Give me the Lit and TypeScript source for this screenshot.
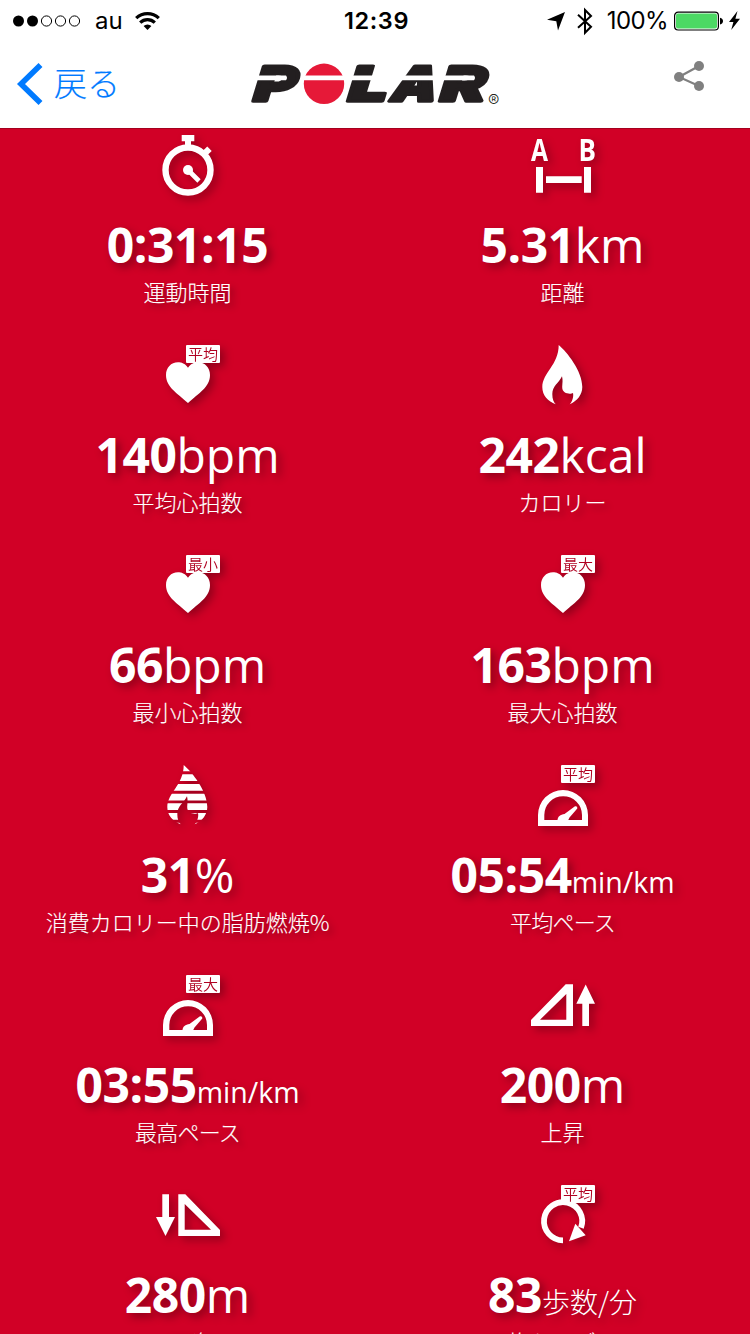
import { LitElement, html, css, svg, nothing } from 'lit';
import { customElement, property } from 'lit/decorators.js';

type IconName = 'stopwatch' | 'distance' | 'heart' | 'flame' | 'fat' | 'gauge' | 'ascent' | 'descent' | 'cadence';

interface Stat {
  icon: IconName;
  badge?: string;
  value: string;
  unit?: string;
  small?: boolean;
  tight?: boolean;
  label: string;
}

const STATS: Stat[] = [
  { icon: 'stopwatch', value: '0:31:15', label: '運動時間' },
  { icon: 'distance', value: '5.31', unit: 'km', label: '距離' },
  { icon: 'heart', badge: '平均', value: '140', unit: 'bpm', label: '平均心拍数' },
  { icon: 'flame', value: '242', unit: 'kcal', label: 'カロリー' },
  { icon: 'heart', badge: '最小', value: '66', unit: 'bpm', label: '最小心拍数' },
  { icon: 'heart', badge: '最大', value: '163', unit: 'bpm', label: '最大心拍数' },
  { icon: 'fat', value: '31', unit: '%', label: '消費カロリー中の脂肪燃焼%' },
  { icon: 'gauge', badge: '平均', value: '05:54', unit: 'min/km', small: true, tight: true, label: '平均ペース' },
  { icon: 'gauge', badge: '最大', value: '03:55', unit: 'min/km', small: true, tight: true, label: '最高ペース' },
  { icon: 'ascent', value: '200', unit: 'm', label: '上昇' },
  { icon: 'descent', value: '280', unit: 'm', label: '下降' },
  { icon: 'cadence', badge: '平均', value: '83', unit: '歩数/分', small: true, label: '平均ケイデンス' },
];

const FLAME =
  'M28.7 0C37 7 52.3 26 52.3 42C52.3 50 47 56 39.7 59.3C42.3 56.5 43.8 52 43 48C40.5 49.5 32 49 32.2 42C32.4 38 33 35 32 31.3C29 38 22.3 41 22.3 49C22.3 54 23.6 57 25.7 59.3C18 56.5 12.3 50.5 12.3 42C12.3 28 28.7 20 28.7 0Z';

const ICONS: Record<IconName, unknown> = {
  stopwatch: svg`
    <path d="M26.7 0H39.3V6.3H36V11H30V6.3H26.7Z"/>
    <circle cx="33" cy="35" r="22.5" fill="none" stroke="#fff" stroke-width="6.4"/>
    <path d="M48 20L54.5 13.8" stroke="#fff" stroke-width="6.4"/>
    <circle cx="33" cy="35" r="5"/>
    <path d="M33 35L44 46" stroke="#fff" stroke-width="4.6"/>`,
  distance: svg`
    <text x="1" y="25.5" font-size="30.5" textLength="17" lengthAdjust="spacingAndGlyphs">A</text>
    <text x="48.5" y="25.5" font-size="30.5" textLength="17.5" lengthAdjust="spacingAndGlyphs">B</text>
    <path d="M6 32H13V57.7H6ZM54 32H61V57.7H54ZM16 41.3H51.7V48H16Z"/>`,
  heart: svg`<path d="M33 22.7C36 18.5 39.5 17.3 43 17.3C50 17.3 55 22.8 55 30C55 42 44 48 33 58C22 48 11 42 11 30C11 22.8 16 17.3 23 17.3C26.5 17.3 30 18.5 33 22.7Z"/>`,
  flame: svg`<path d=${FLAME}/>`,
  fat: svg`
    <clipPath id="stripes"><path d="M0 0H65V6.3H0ZM0 9.3H65V16H0ZM0 19H65V25.7H0ZM0 28.7H65V35.5H0ZM0 38.3H65V45H0ZM0 48H65V54.7H0ZM0 57.7H65V61H0Z"/></clipPath>
    <path clip-path="url(#stripes)" d=${FLAME}/>`,
  gauge: svg`
    <path fill-rule="evenodd" d="M8 61V50A25 25 0 0 1 58 50V61ZM14.3 55H52V50A18.8 18.8 0 0 0 14.3 50Z"/>
    <path d="M27.5 56C27.5 51 30.5 49.8 34.5 49L45 41.2Q47.8 40.8 47.3 43.6L39.5 52.5L37.8 56Z"/>`,
  ascent: svg`
    <path fill-rule="evenodd" d="M1 45L35.7 9.3H43V51H1ZM10 44.7H36.3V19Z"/>
    <path d="M55.7 9.5L65 28.7H59V51H52.3V28.7H46.3Z"/>`,
  descent: svg`
    <path fill-rule="evenodd" d="M23.3 9.3H30.3L65 45V51H23.3ZM29.7 19V44.7H56Z"/>
    <path d="M7.3 9.3H14V32H20L10.5 51L1 32H7.3Z"/>`,
  cadence: svg`
    <path d="M33 55.3A19.1 19.1 0 1 1 51 42.8" fill="none" stroke="#fff" stroke-width="5.8"/>
    <path d="M45.3 38.7L55.7 50.3L39 56.3Z"/>`,
};

@customElement('stat-cell')
class StatCell extends LitElement {
  @property({ attribute: false }) stat!: Stat;

  static styles = css`
    :host { display: flex; flex-direction: column; align-items: center; height: 210px; color: #fff; white-space: nowrap; }
    .icon { position: relative; width: 65px; height: 66px; filter: drop-shadow(4px 4px 4px rgba(0, 0, 0, 0.3)); }
    .icon svg { display: block; overflow: visible; fill: #fff; font-family: 'Open Sans', sans-serif; font-weight: 700; }
    .badge {
      position: absolute; top: 0; right: 0; width: 34px; height: 18px; border-radius: 1px;
      background: #fff; color: #b00020; text-align: center;
      font: 350 15px/18px 'Noto Sans CJK JP', sans-serif;
    }
    .value {
      margin-top: 11px; height: 66px; line-height: 66px; font-size: 48px; font-weight: 700;
      font-family: 'Open Sans', 'Noto Sans CJK JP', sans-serif; letter-spacing: -0.45px;
      text-shadow: 4px 4px 8px rgba(0, 0, 0, 0.35);
    }
    .unit { font-weight: 400; letter-spacing: 0; }
    .small { font-size: 28.5px; }
    .cjk { font-size: 28px; font-weight: 300; font-family: 'Noto Sans CJK JP', sans-serif; }
    .label {
      margin-top: -3px; height: 32px; line-height: 32px; font-size: 22px; font-weight: 300;
      font-family: 'Noto Sans CJK JP', sans-serif;
      text-shadow: 4px 4px 6px rgba(0, 0, 0, 0.35);
      -webkit-text-stroke: 0.15px #fff;
    }
    .tight { letter-spacing: -0.8px; }
  `;

  render() {
    const s = this.stat;
    const unitClass = s.icon === 'cadence' ? 'unit cjk' : s.small ? 'unit small' : 'unit';
    return html`
      <div class="icon">
        <svg width="65" height="66" viewBox="0 0 65 66">${ICONS[s.icon]}</svg>
        ${s.badge ? html`<span class="badge">${s.badge}</span>` : nothing}
      </div>
      <div class="value">${s.value}${s.unit ? html`<span class=${unitClass}>${s.unit}</span>` : nothing}</div>
      <div class="label ${s.tight ? 'tight' : ''}">${s.label}</div>
    `;
  }
}

@customElement('app-root')
class AppRoot extends LitElement {
  static styles = css`
    :host { display: flex; flex-direction: column; width: 750px; height: 1334px; overflow: hidden; background: #d10026; }
    header { flex: none; height: 128px; background: #fff; border-bottom: 1px solid #a4001e; }
    svg { display: block; flex: none; overflow: visible; }
    .status {
      display: grid; grid-template-columns: 1fr auto 1fr; align-items: center; height: 40px;
      padding: 0 10px 0 13px; color: #000; font: 400 24px/42px Inter, sans-serif;
    }
    .left, .right { display: flex; align-items: center; height: 40px; }
    .right { justify-content: flex-end; }
    .carrier { margin: 0 12px 0 14px; }
    .time { font-weight: 600; font-size: 23.5px; letter-spacing: 0.6px; }
    .percent { margin: 0 6px 0 14px; letter-spacing: -0.6px; }
    .bluetooth { margin-left: 12px; }
    .nav { display: grid; grid-template-columns: 1fr auto 1fr; align-items: center; height: 88px; padding: 0 45px 0 17px; }
    .back { display: flex; align-items: center; gap: 11px; color: #007aff; font: 300 33px/84px 'Noto Sans CJK JP', sans-serif; -webkit-text-stroke: 0.2px #007aff; }
    .back span { padding-bottom: 4px; }
    .logo { margin-left: 28px; font-family: Inter, sans-serif; font-weight: 900; }
    .share { justify-self: end; margin-bottom: 16px; }
    main { display: grid; grid-template-columns: 375px 375px; padding-top: 6px; }
  `;

  render() {
    return html`
      <header>
        <div class="status">
          <div class="left">
            <svg width="68" height="12" viewBox="0 0 68 12">
              <circle cx="5.5" cy="6" r="5.5"/><circle cx="19.5" cy="6" r="5.5"/>
              <g fill="none" stroke="#000" stroke-width="1"><circle cx="33.5" cy="6" r="5.1"/><circle cx="47.5" cy="6" r="5.1"/><circle cx="61.5" cy="6" r="5.1"/></g>
            </svg>
            <span class="carrier">au</span>
            <svg width="25" height="18" viewBox="0 0 25 18">
              <g fill="none" stroke="#000" stroke-width="3.2"><path d="M1.2 6.2A16.3 16.3 0 0 1 23.8 6.2"/><path d="M5.2 10.6A10.4 10.4 0 0 1 19.8 10.6"/></g>
              <path d="M8.6 14A5.6 5.6 0 0 1 16.4 14L12.5 18Z"/>
            </svg>
          </div>
          <span class="time">12:39</span>
          <div class="right">
            <svg width="18" height="19" viewBox="0 0 18 19"><path d="M18 0L11 18.5L9.3 9.2L0 7.8Z"/></svg>
            <svg class="bluetooth" width="16" height="27" viewBox="0 0 16 27"><path d="M1 6.8L14 18.8L8 24.8V2L14 8L1 19.8" fill="none" stroke="#000" stroke-width="2"/></svg>
            <span class="percent">100%</span>
            <svg width="66" height="20" viewBox="0 0 66 20">
              <rect x=".6" y="1.2" width="43.8" height="17.8" rx="3.5" fill="#fff" stroke="#000" stroke-width="1.2"/>
              <rect x="2" y="2.6" width="41" height="15" rx="2" fill="#4cd964"/>
              <path d="M46 6.7Q49 7.3 49 10.1Q49 12.9 46 13.5Z"/>
              <path d="M63.5 0L55 11H59.4L57.2 19L66 7.8H61.4Z"/>
            </svg>
          </div>
        </div>
        <div class="nav">
          <div class="back">
            <svg width="26" height="42" viewBox="0 0 26 42"><path d="M23.5 2L4 21L23.5 40" fill="none" stroke="#007aff" stroke-width="5.6"/></svg>
            <span>戻る</span>
          </div>
          <svg class="logo" width="250" height="40" viewBox="0 0 250 40">
            <g fill="#231f20" stroke="#231f20" stroke-width="3.4" stroke-linejoin="round" font-size="48">
              <text transform="translate(0.5 37) skewX(-17)" textLength="42" lengthAdjust="spacingAndGlyphs">P</text>
              <text transform="translate(95 37) skewX(-17)" textLength="39" lengthAdjust="spacingAndGlyphs">L</text>
              <text transform="translate(138 37) skewX(-19)" textLength="45" lengthAdjust="spacingAndGlyphs">A</text>
              <text transform="translate(187 37) skewX(-17)" textLength="45" lengthAdjust="spacingAndGlyphs">R</text>
            </g>
            <circle cx="74" cy="19.8" r="21.2" fill="#fff"/>
            <circle cx="74" cy="19.8" r="20.2" fill="#e61938"/>
            <path d="M52 11.5H184V16.2H52ZM4 11.5H36Q38 13.8 36 16.2H4ZM188 11.5H224Q226 13.8 224 16.2H188Z" fill="#fff"/>
            <text x="238" y="43" font-size="17" font-weight="300" fill="#231f20">®</text>
          </svg>
          <svg class="share" width="31" height="30" viewBox="0 0 31 30" fill="#808080">
            <path d="M25 5L5 16L25 25" fill="none" stroke="#808080" stroke-width="2.2"/>
            <circle cx="25" cy="5" r="5"/><circle cx="5" cy="16" r="5"/><circle cx="25" cy="25" r="5"/>
          </svg>
        </div>
      </header>
      <main>${STATS.map((s) => html`<stat-cell .stat=${s}></stat-cell>`)}</main>
    `;
  }
}
